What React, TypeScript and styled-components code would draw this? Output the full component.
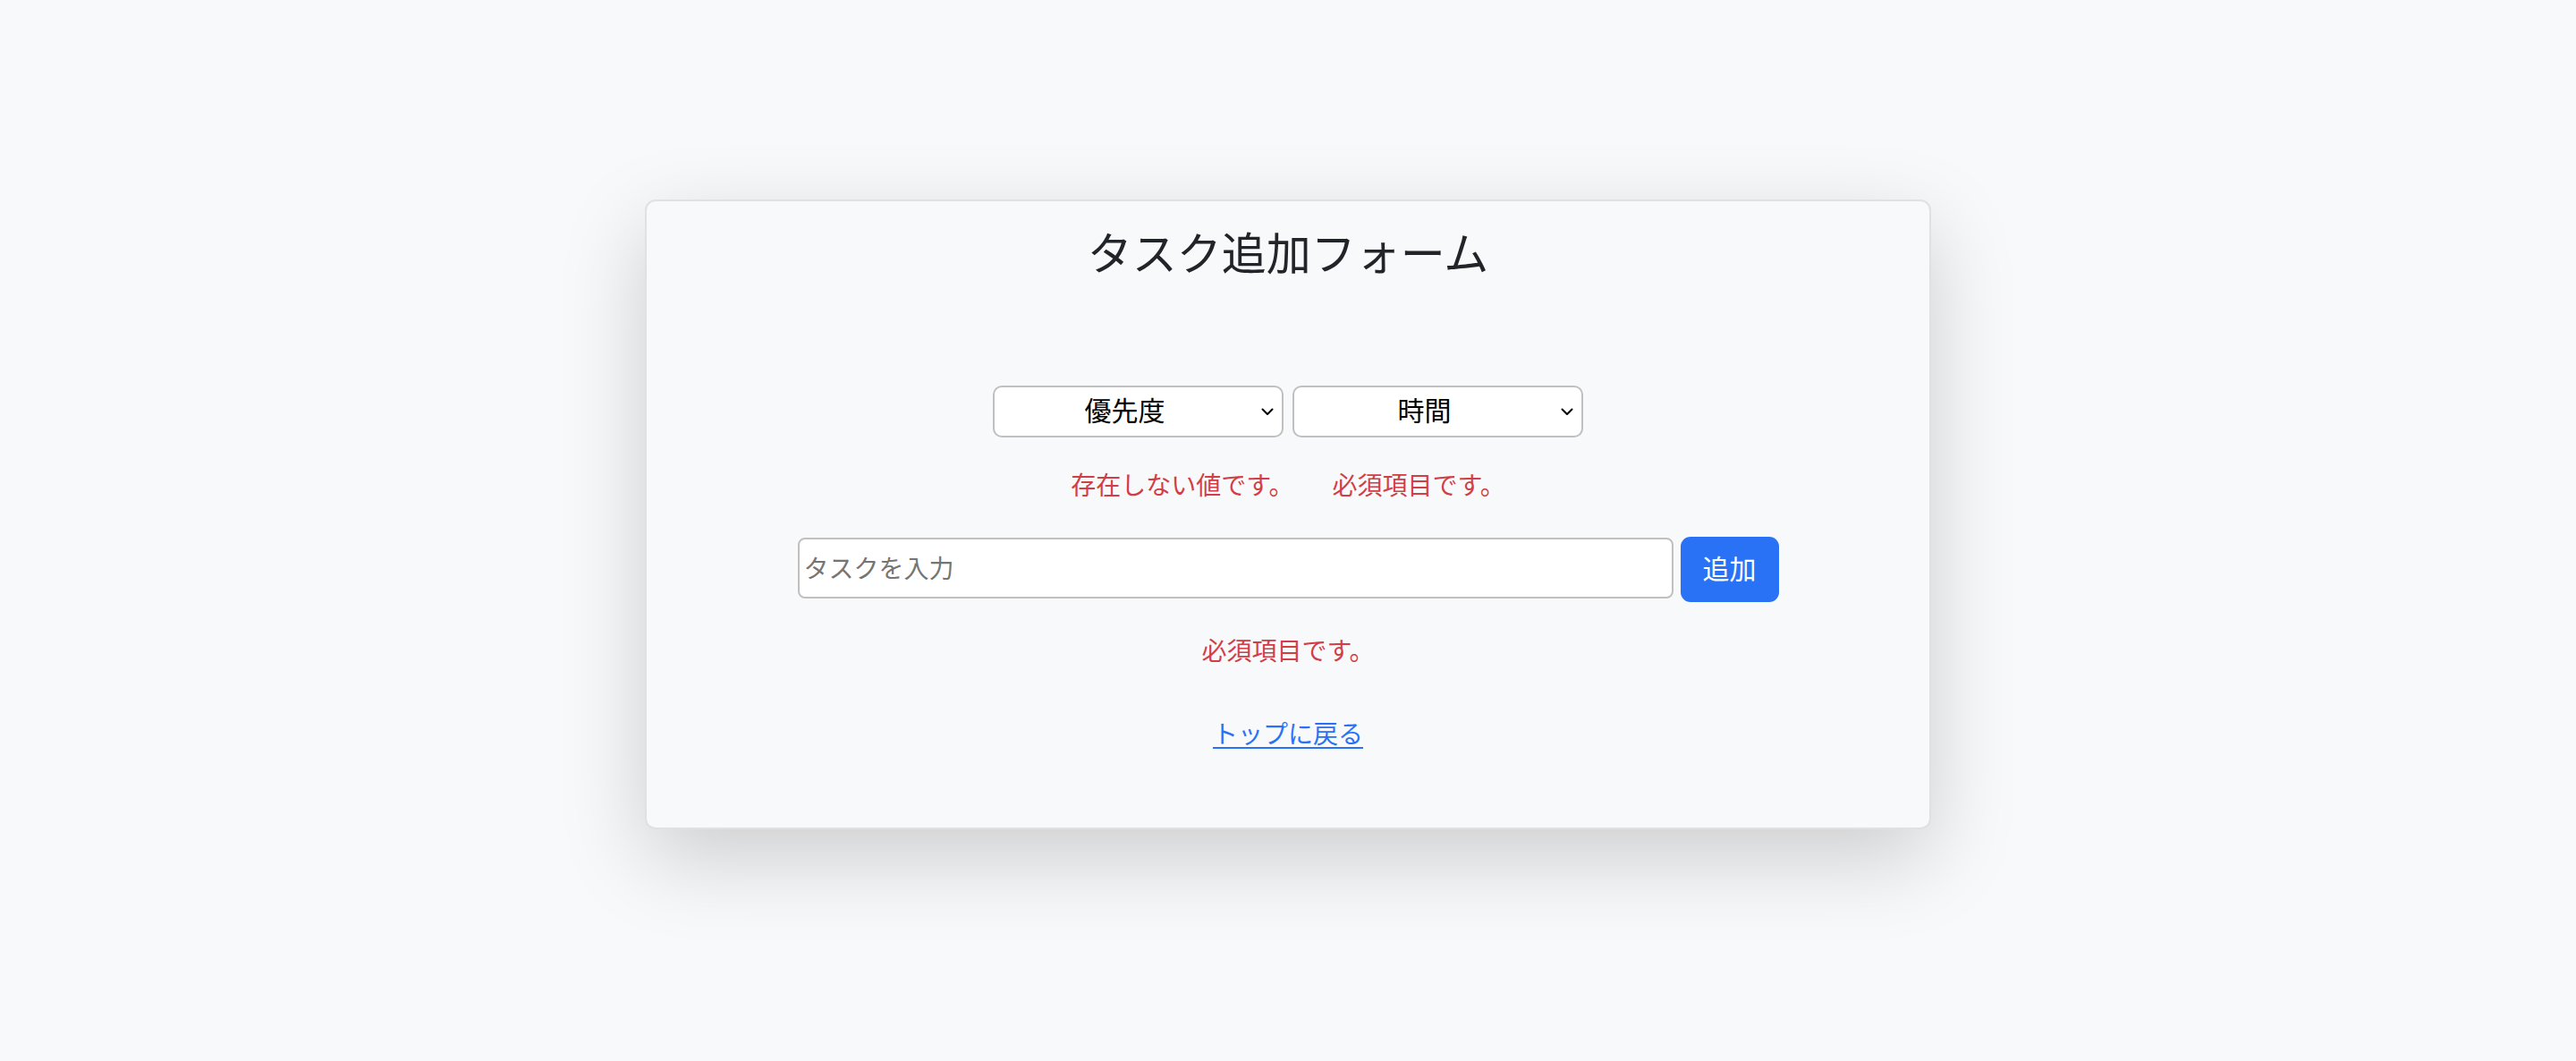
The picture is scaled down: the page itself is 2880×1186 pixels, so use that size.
import React from "react";
import styled, { createGlobalStyle } from "styled-components";

const GlobalStyle = createGlobalStyle`
  html, body {
    margin: 0;
    padding: 0;
    background: #f8f9fa;
  }
  body {
    font-family: "Noto Sans CJK JP", "Noto Sans", sans-serif;
    color: #212529;
  }
  * { box-sizing: border-box; }
`;

const Page = styled.div`
  min-height: 100vh;
  padding-top: 223px;
  background: #f8f9fa;
`;

const Card = styled.div`
  width: 1438px;
  margin: 0 auto;
  background: #f8f9fa;
  border: 2px solid #e0e1e5;
  border-radius: 12px;
  box-shadow: 0 32px 96px rgba(0, 0, 0, 0.175);
  display: flex;
  flex-direction: column;
  align-items: center;
  padding: 25px 0 85px;
`;

const Title = styled.h1`
  margin: 0;
  font-size: 50px;
  line-height: 60px;
  font-weight: 400;
  color: #212529;
`;

const SelectRow = styled.div`
  display: flex;
  gap: 10px;
  margin-top: 121px;
`;

const SelectWrap = styled.div`
  position: relative;
  width: 325px;
  height: 58px;
`;

const Select = styled.select`
  appearance: none;
  -webkit-appearance: none;
  width: 100%;
  height: 100%;
  background: #ffffff;
  border: 2px solid #c0c0c0;
  border-radius: 10px;
  font-family: "Noto Sans CJK JP", "Noto Sans", sans-serif;
  font-size: 30px;
  color: #000000;
  text-align: center;
  text-align-last: center;
  padding: 0 40px 6px 10px;
  outline: none;
`;

const Chevron = styled.svg`
  position: absolute;
  right: 11px;
  top: 50%;
  margin-top: -4px;
  width: 14px;
  height: 9px;
  pointer-events: none;
`;

const ErrorRow = styled.div<{ $top: number }>`
  display: flex;
  justify-content: center;
  gap: 43px;
  margin-top: ${(p) => p.$top}px;
`;

const ErrorText = styled.span`
  font-size: 28px;
  line-height: 42px;
  color: #d13e48;
`;

const InputRow = styled.div`
  display: flex;
  align-items: flex-start;
  gap: 8px;
  margin-top: 38px;
`;

const TaskInput = styled.input`
  width: 979px;
  height: 68px;
  margin-top: 1px;
  background: #ffffff;
  border: 2px solid #c0c0c0;
  border-radius: 8px;
  padding: 0 5px 2px;
  font-family: "Noto Sans CJK JP", "Noto Sans", sans-serif;
  font-size: 28px;
  color: #212529;
  outline: none;
  &::placeholder {
    color: #757575;
  }
`;

const AddButton = styled.button`
  width: 110px;
  height: 73px;
  background: #2a72f5;
  border: none;
  border-radius: 11px;
  color: #ffffff;
  font-family: "Noto Sans CJK JP", "Noto Sans", sans-serif;
  font-size: 30px;
  padding: 0 0 5px;
  cursor: pointer;
`;

const BackLink = styled.a`
  margin-top: 51px;
  font-size: 28px;
  line-height: 42px;
  color: #2a72f5;
  text-decoration: underline;
  text-underline-offset: 4px;
  text-decoration-thickness: 2px;
`;

const ChevronIcon = () => (
  <Chevron viewBox="0 0 14 9" fill="none">
    <path d="M1.5 1.5 L7 7 L12.5 1.5" stroke="#000" strokeWidth="2" strokeLinecap="round" strokeLinejoin="round" />
  </Chevron>
);

export default function App() {
  return (
    <>
      <GlobalStyle />
      <Page>
        <Card>
          <Title>タスク追加フォーム</Title>
          <SelectRow>
            <SelectWrap>
              <Select defaultValue="">
                <option value="">優先度</option>
                <option value="high">高</option>
                <option value="mid">中</option>
                <option value="low">低</option>
              </Select>
              <ChevronIcon />
            </SelectWrap>
            <SelectWrap>
              <Select defaultValue="">
                <option value="">時間</option>
                <option value="30">30分</option>
                <option value="60">1時間</option>
              </Select>
              <ChevronIcon />
            </SelectWrap>
          </SelectRow>
          <ErrorRow $top={31}>
            <ErrorText>存在しない値です。</ErrorText>
            <ErrorText>必須項目です。</ErrorText>
          </ErrorRow>
          <InputRow>
            <TaskInput type="text" placeholder="タスクを入力" />
            <AddButton type="button">追加</AddButton>
          </InputRow>
          <ErrorRow $top={32}>
            <ErrorText>必須項目です。</ErrorText>
          </ErrorRow>
          <BackLink href="#">トップに戻る</BackLink>
        </Card>
      </Page>
    </>
  );
}
